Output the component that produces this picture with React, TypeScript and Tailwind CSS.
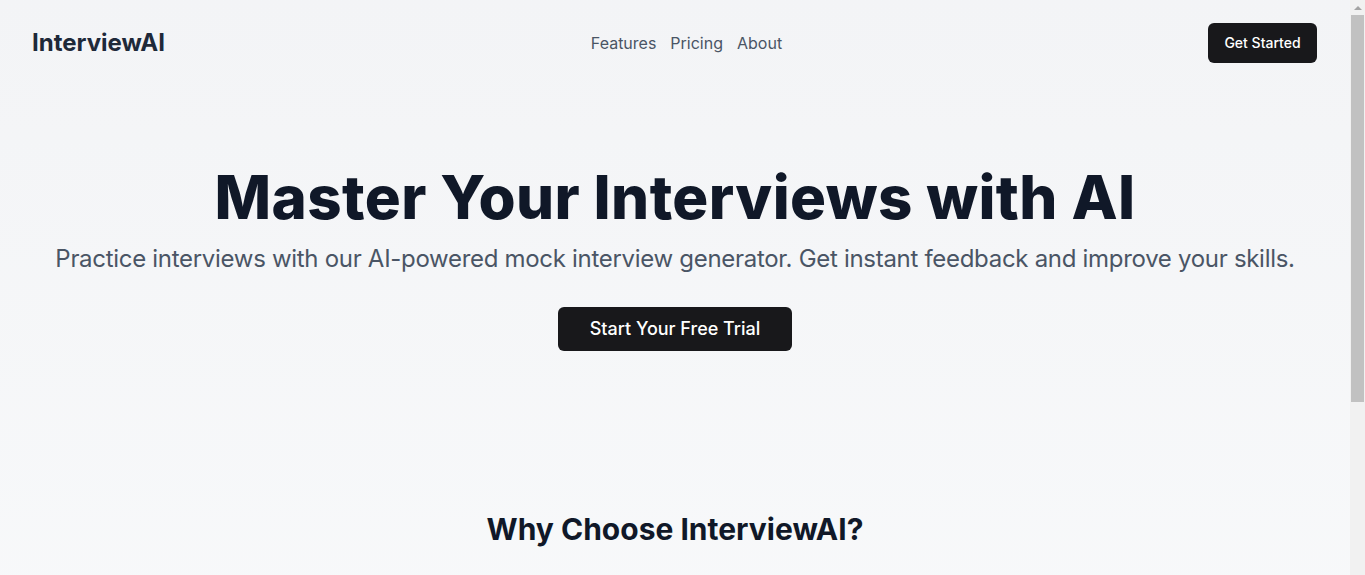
import { Brain, MessageSquare, BarChart3 } from "lucide-react";

const features = [
  {
    icon: Brain,
    title: "AI-Powered Questions",
    text: "Get realistic interview questions tailored to your role and experience level.",
  },
  {
    icon: MessageSquare,
    title: "Instant Feedback",
    text: "Receive detailed feedback on your answers right after every mock interview.",
  },
  {
    icon: BarChart3,
    title: "Track Your Progress",
    text: "See how your skills improve over time with clear performance insights.",
  },
];

// the browser scrollbar seen in the screenshot
const ScrollBar = () => (
  <div className="flex w-[15px] shrink-0 flex-col bg-[#f1f1f1]">
    <div className="flex h-[15px] items-center justify-center">
      <div className="h-0 w-0 border-x-[4px] border-b-[4px] border-x-transparent border-b-[#a3a3a3]" />
    </div>
    <div className="mx-auto h-[387px] w-[13px] bg-[#c1c1c1]" />
  </div>
);

const App = () => {
  return (
    <div className="flex h-screen">
      <div className="flex-1 overflow-y-auto">
        <div className="min-h-screen bg-gradient-to-b from-gray-100 to-gray-50 font-['Inter','Liberation_Sans',sans-serif]">
          {/* Header */}
          <header className="flex items-center justify-between pl-8 pr-[33px] py-[23px]">
            <div className="text-2xl font-bold text-gray-800">InterviewAI</div>
            <nav className="flex items-center gap-[14px] text-base text-gray-600">
              <a href="#" className="hover:text-gray-900">Features</a>
              <a href="#" className="hover:text-gray-900">Pricing</a>
              <a href="#" className="hover:text-gray-900">About</a>
            </nav>
            <button className="h-10 w-[109px] rounded-md bg-zinc-900 text-sm font-medium text-white">
              Get Started
            </button>
          </header>

          {/* Hero */}
          <section className="px-8 pt-[81px] pb-20 text-center">
            <h1 className="mb-4 text-6xl leading-none font-extrabold tracking-[0.4px] text-gray-900">
              Master Your Interviews with AI
            </h1>
            <p className="mb-8 text-2xl tracking-[-0.3px] text-gray-600">
              Practice interviews with our AI-powered mock interview generator. Get instant feedback and improve your skills.
            </p>
            <button className="h-11 px-8 rounded-md bg-zinc-900 text-lg font-medium text-white">
              Start Your Free Trial
            </button>
          </section>

          {/* Features */}
          <section className="px-8 py-20">
            <h2 className="mb-12 text-center text-3xl font-bold text-gray-900">Why Choose InterviewAI?</h2>
            <div className="mx-auto grid max-w-5xl grid-cols-3 gap-8">
              {features.map((f) => (
                <div key={f.title} className="flex flex-col items-center text-center">
                  <f.icon className="mb-3 h-10 w-10 text-gray-800" />
                  <h3 className="mb-2 text-xl font-semibold text-gray-900">{f.title}</h3>
                  <p className="text-gray-600">{f.text}</p>
                </div>
              ))}
            </div>
          </section>
        </div>
      </div>
      <ScrollBar />
    </div>
  );
};

export default App;
